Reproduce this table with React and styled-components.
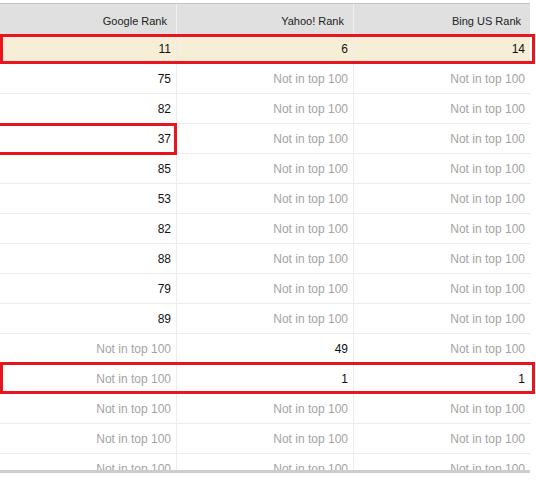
import React from 'react';
import styled, { createGlobalStyle } from 'styled-components';

const NA = 'Not in top 100';

const rows = [
  { ranks: [11, 6, 14], highlight: true },
  { ranks: [75, NA, NA] },
  { ranks: [82, NA, NA] },
  { ranks: [37, NA, NA] },
  { ranks: [85, NA, NA] },
  { ranks: [53, NA, NA] },
  { ranks: [82, NA, NA] },
  { ranks: [88, NA, NA] },
  { ranks: [79, NA, NA] },
  { ranks: [89, NA, NA] },
  { ranks: [NA, 49, NA] },
  { ranks: [NA, 1, 1] },
  { ranks: [NA, NA, NA] },
  { ranks: [NA, NA, NA] },
  { ranks: [NA, NA, NA] },
];

const columns = ['Google Rank', 'Yahoo! Rank', 'Bing US Rank'];

const GlobalStyle = createGlobalStyle`
  body {
    margin: 0;
    background: #fff;
    font-family: "Liberation Sans", Arial, sans-serif;
  }
`;

const Page = styled.div`
  position: relative;
  width: 536px;
  height: 482px;
  padding-top: 3px;
  box-sizing: border-box;
  overflow: hidden;
`;

const Table = styled.div`
  width: 530px;
  border-top: 1px solid #c4c4c4;
  border-bottom: 3px solid #cdcdcd;
`;

const Grid = styled.div`
  display: grid;
  grid-template-columns: 177px 177px 176px;
`;

const HeaderCell = styled.div`
  height: 30px;
  box-sizing: border-box;
  padding: 3px 9px 0 0;
  background: #e0e0e0;
  border-right: 1px solid #f1f1f1;
  color: #222;
  font-size: 11px;
  display: flex;
  align-items: center;
  justify-content: flex-end;
  &:last-child {
    border-right: none;
  }
`;

const Body = styled.div`
  height: 436px;
  overflow: hidden;
`;

const Cell = styled.div`
  height: 30px;
  box-sizing: border-box;
  padding-right: 5px;
  border-bottom: 1px solid #ececec;
  border-right: 1px solid #ececec;
  background: ${(p) => (p.$highlight ? '#f7eed8' : '#fff')};
  color: ${(p) => (p.$muted ? '#a3a3a3' : '#111')};
  font-size: 12px;
  display: flex;
  align-items: center;
  justify-content: flex-end;
  &:nth-child(3n) {
    border-right: none;
  }
`;

const Marker = styled.div`
  position: absolute;
  top: ${(p) => p.$top}px;
  left: ${(p) => p.$left}px;
  width: ${(p) => p.$width}px;
  height: ${(p) => p.$height}px;
  box-sizing: border-box;
  border: 3px solid #e8141e;
  pointer-events: none;
`;

export default function App() {
  return (
    <>
      <GlobalStyle />
      <Page>
        <Table>
          <Grid>
            {columns.map((c) => (
              <HeaderCell key={c}>{c}</HeaderCell>
            ))}
          </Grid>
          <Body>
            <Grid>
              {rows.map((r, i) =>
                r.ranks.map((v, j) => (
                  <Cell key={i + '-' + j} $highlight={r.highlight} $muted={v === NA}>
                    {v}
                  </Cell>
                ))
              )}
            </Grid>
          </Body>
        </Table>
        <Marker $top={34} $left={0} $width={535} $height={30} />
        <Marker $top={123} $left={-3} $width={180} $height={32} />
        <Marker $top={362} $left={0} $width={535} $height={32} />
      </Page>
    </>
  );
}
